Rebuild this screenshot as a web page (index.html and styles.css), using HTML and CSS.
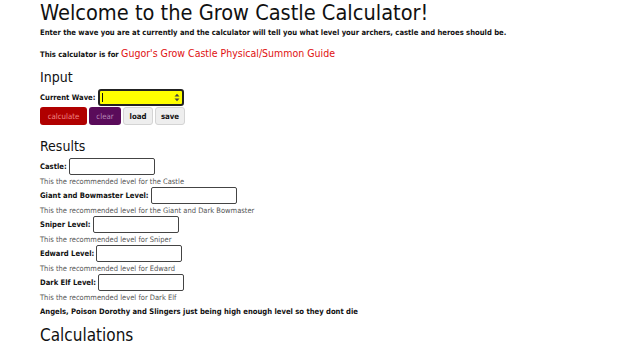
FILE: index.html
```html
<!DOCTYPE html>
<html lang="en">
<head>
    <meta charset="UTF-8">
    <meta name="viewport" content="width=device-width, initial-scale=1.0">
    <title>Grow Castle Calculator</title>
    <link rel="stylesheet" href="styles.css">
</head>
<body>
    <div class="page">
        <h1>Welcome to the Grow Castle Calculator!</h1>
        <p class="intro">Enter the wave you are at currently and the calculator will tell you what level your archers, castle and heroes should be.</p>
        <p class="intro guide">This calculator is for <a href="#">Gugor's Grow Castle Physical/Summon Guide</a></p>

        <h2>Input</h2>
        <div class="field">
            <label for="wave">Current Wave:</label>
            <span class="wave-box">
                <input type="text" id="wave" class="wave-input">
                <span class="caret"></span>
                <svg class="spinner" width="6" height="9" viewBox="0 0 6 9">
                    <path d="M0.5 3.5 L3 0.8 L5.5 3.5 Z" fill="#444"/>
                    <path d="M0.5 5.5 L3 8.2 L5.5 5.5 Z" fill="#444"/>
                </svg>
            </span>
        </div>
        <div class="buttons">
            <button class="btn btn-calc">calculate</button>
            <button class="btn btn-clear">clear</button>
            <button class="btn btn-plain">load</button>
            <button class="btn btn-plain">save</button>
        </div>

        <h2>Results</h2>
        <div class="field">
            <label for="castle">Castle:</label>
            <input type="text" id="castle" class="result-input">
        </div>
        <p class="hint">This the recommended level for the Castle</p>
        <div class="field">
            <label for="giant">Giant and Bowmaster Level:</label>
            <input type="text" id="giant" class="result-input">
        </div>
        <p class="hint">This the recommended level for the Giant and Dark Bowmaster</p>
        <div class="field">
            <label for="sniper">Sniper Level:</label>
            <input type="text" id="sniper" class="result-input">
        </div>
        <p class="hint">This the recommended level for Sniper</p>
        <div class="field">
            <label for="edward">Edward Level:</label>
            <input type="text" id="edward" class="result-input">
        </div>
        <p class="hint">This the recommended level for Edward</p>
        <div class="field">
            <label for="darkelf">Dark Elf Level:</label>
            <input type="text" id="darkelf" class="result-input">
        </div>
        <p class="hint">This the recommended level for Dark Elf</p>
        <p class="intro">Angels, Poison Dorothy and Slingers just being high enough level so they dont die</p>

        <h2 class="calc-title">Calculations</h2>
    </div>
</body>
</html>
```

FILE: styles.css
```css
* {
    margin: 0;
    padding: 0;
    box-sizing: border-box;
}
body {
    font-family: "DejaVu Sans Condensed", "DejaVu Sans", Tahoma, sans-serif;
    background-color: #fff;
    color: #111;
}
.page {
    padding: 0 40px;
}
h1 {
    font-weight: normal;
    font-size: 21.6px;
    line-height: 25px;
    color: #111;
}
.intro {
    font-size: 7.6px;
    font-weight: bold;
    line-height: 12px;
    margin-top: 2px;
}
.guide {
    margin-top: 8px;
}
.guide a {
    color: #e01010;
    text-decoration: none;
    font-weight: normal;
    font-size: 10.5px;
}
h2 {
    font-weight: normal;
    font-size: 14px;
    line-height: 18px;
    margin-top: 7px;
    margin-bottom: 3px;
}
.buttons + h2 {
    margin-top: 12px;
}
.calc-title {
    font-size: 17px;
    line-height: 22px;
    margin-top: 6px;
}
.field {
    display: flex;
    align-items: center;
    gap: 2px;
    height: 17px;
}
label {
    font-size: 7.6px;
    font-weight: bold;
}
.wave-box {
    position: relative;
    display: flex;
    margin-left: 1px;
}
.wave-input {
    width: 86px;
    height: 17px;
    background-color: #ffff00;
    border: 2px solid #222;
    border-radius: 3px;
    font-size: 8px;
    padding: 0 3px;
    outline: none;
}
.caret {
    position: absolute;
    left: 4px;
    top: 4px;
    width: 1px;
    height: 9px;
    background-color: #111;
}
.spinner {
    position: absolute;
    right: 4px;
    top: 4px;
}
.result-input {
    width: 86px;
    height: 17px;
    background-color: #fff;
    border: 1px solid #444;
    border-radius: 2px;
    font-size: 8px;
}
.buttons {
    display: flex;
    gap: 2px;
    margin-top: 1px;
}
.btn {
    height: 18px;
    padding: 0;
    border: none;
    border-radius: 3px;
    font-family: "DejaVu Sans Condensed", "DejaVu Sans", Tahoma, sans-serif;
    font-size: 7.8px;
    cursor: pointer;
}
.btn-calc {
    background-color: #b00000;
    color: #f08888;
    width: 47px;
}
.btn-clear {
    background-color: #5a0b5a;
    color: #b888b8;
    width: 32px;
}
.btn-plain {
    background-color: #eee;
    border: 1px solid #d4d4d4;
    color: #111;
    font-weight: bold;
    width: 30px;
}
.hint {
    font-size: 7.5px;
    color: #555;
    line-height: 12px;
    padding-top: 1px;
}
.hint + .field {
    margin-top: -1px;
}
```
